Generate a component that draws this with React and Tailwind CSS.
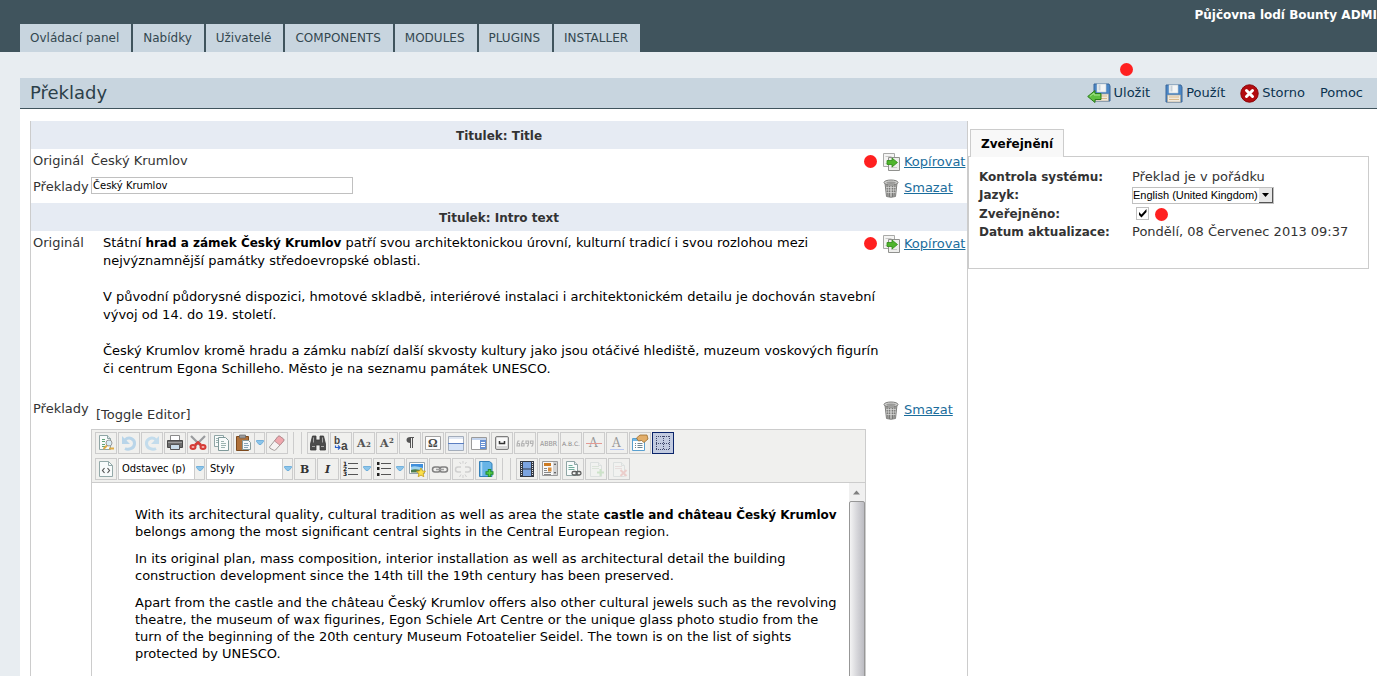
import React from 'react';

const menuItems = ['Ovládací panel', 'Nabídky', 'Uživatelé', 'COMPONENTS', 'MODULES', 'PLUGINS', 'INSTALLER'];

const Dot = ({ className }) => (
    <span className={`absolute w-[13px] h-[13px] rounded-full bg-[#ff2020] ${className}`} />
);

/* ---------- page icons ---------- */

const Floppy = () => (
    <g>
        <path d="M1 1h15l1 2v15H1z" fill="#4a86c6" stroke="#3a6699" />
        <path d="M4 1h9v8H4z" fill="#f3f5f6" stroke="#c4ccd4" strokeWidth=".6" />
        <path d="M5.5 1.5h2v6h-2z" fill="#c9d2da" />
        <path d="M2.5 11h13v7h-13z" fill="#f0e9dd" stroke="#a79f8c" strokeWidth=".6" />
        <path d="M4 13h10M4 15.5h10" stroke="#d9b98c" />
    </g>
);

const SaveIcon = () => (
    <svg width="24" height="20" viewBox="0 0 24 20">
        <g transform="translate(6 0)"><Floppy /></g>
        <path d="M.7 13.5 8 7.5v3h6v6H8v3z" fill="#5fbf3f" stroke="#2c7d1b" strokeLinejoin="round" />
        <path d="M3 13.3 7 10v2h6" fill="none" stroke="#a9e58f" />
    </svg>
);

const ApplyIcon = () => (
    <svg width="18" height="19" viewBox="0 0 18 19"><Floppy /></svg>
);

const CancelIcon = () => (
    <svg width="19" height="19" viewBox="0 0 19 19">
        <circle cx="9.5" cy="9.5" r="8.7" fill="#b30c10" stroke="#8c0508" />
        <path d="M6.5 6.5l6 6M12.5 6.5l-6 6" stroke="#fff" strokeWidth="3" strokeLinecap="round" />
    </svg>
);

const CopyIcon = () => (
    <svg width="18" height="18" viewBox="0 0 18 18">
        <path d="M.5 .5h11v13H.5z" fill="#f4f4f3" stroke="#a9aaa8" />
        <path d="M5.5 4.5h11v13h-11z" fill="#eeeeec" stroke="#90918e" />
        <path d="M2.5 3.5h6M2.5 10.5h2M8 14.5h6" stroke="#c9c9c7" />
        <path d="M4 7.5h5V5l5.5 4.5L9 14v-2.5H4z" fill="#4fb52c" stroke="#2f8a17" strokeWidth=".8" />
    </svg>
);

const TrashIcon = () => (
    <svg width="16" height="19" viewBox="0 0 16 19">
        <path d="M2 4l1.5 13.5q4.5 1.5 9 0L14 4z" fill="#b4b4b2" stroke="#80807e" />
        <path d="M4 6l1 11M6.5 7v11M9.5 7v11M12 6l-1 11" stroke="#737371" strokeWidth=".9" />
        <path d="M3 8.5h10M3 11h10M3.5 13.5h9" stroke="#dededc" strokeWidth=".7" />
        <ellipse cx="8" cy="3.5" rx="7" ry="2.5" fill="#d3d3d1" stroke="#7d7d7b" />
        <ellipse cx="8" cy="3.7" rx="4.8" ry="1.2" fill="#9a9a98" />
    </svg>
);

/* ---------- editor icons, drawn on a 20px grid ---------- */

const Sheet = ({ x = 0, y = 0 }) => (
    <g transform={`translate(${x} ${y})`}>
        <path d="M.5 .5h8l3 3v11H.5z" fill="#f8fbfb" stroke="#8fa5a5" />
        <path d="M8.5 .5v3h3" fill="#dfe9e9" stroke="#8fa5a5" />
    </g>
);

const icons = {
    preview: (
        <>
            <Sheet x={3} y={2} />
            <path d="M6 6.5h3M6 8.5h3M6 11.5h3M6 13.5h3" stroke="#62a378" />
            <circle cx="13" cy="10" r="3" fill="#d9ecf5" stroke="#9a9a9a" />
            <path d="M11 12.5l-3.5 3.5M13 15.5h5" stroke="#e0ab45" strokeWidth="2" />
        </>
    ),
    undo: (
        <>
            <path d="M6 7c4-4 10-1 9.5 4S9 17 6 15.5" fill="none" stroke="#b9d5e9" strokeWidth="3" />
            <path d="M3 3v8h8z" fill="#b9d5e9" />
        </>
    ),
    redo: (
        <>
            <path d="M14 7C10 3 4 6 4.5 11S11 17 14 15.5" fill="none" stroke="#c3dcec" strokeWidth="3" />
            <path d="M17 3v8H9z" fill="#c3dcec" />
        </>
    ),
    print: (
        <>
            <path d="M5.5 2.5h9v5h-9z" fill="#fff" stroke="#8a8a8a" />
            <path d="M2.5 7.5h15v7h-15z" fill="#6d6d6d" stroke="#4a4a4a" />
            <path d="M3 9.5h14" stroke="#9d9d9d" />
            <path d="M5.5 11.5h9v5h-9z" fill="#c9dce9" stroke="#555" />
        </>
    ),
    cut: (
        <>
            <path d="M3 3l9.5 9.5M17 3L7.5 12.5" stroke="#9a9c9e" strokeWidth="2.2" />
            <path d="M7 12l3-2.5 3 2.5" fill="none" stroke="#d53c37" strokeWidth="2.5" />
            <ellipse cx="5" cy="14" rx="2.5" ry="2" fill="#f4b5b1" stroke="#d53c37" strokeWidth="2" />
            <ellipse cx="15" cy="14" rx="2.5" ry="2" fill="#f4b5b1" stroke="#d53c37" strokeWidth="2" />
        </>
    ),
    copy: (
        <>
            <path d="M3.5 2.5h9v11h-9z" fill="#f8fbfb" stroke="#8fa5a5" />
            <path d="M5 5.5h3M5 7.5h2M5 9.5h2" stroke="#9bb3b0" />
            <g transform="translate(7 4)">
                <path d="M.5 .5h7l3 3v10H.5z" fill="#f8fbfb" stroke="#7f9999" />
                <path d="M3 4.5h3M3 6.5h5M3 8.5h5M3 10.5h4" stroke="#9bb3b0" />
            </g>
        </>
    ),
    paste: (
        <>
            <path d="M2.5 3.5h12v14h-12z" fill="#b0713a" stroke="#7c4a1e" />
            <path d="M5.5 2h6v3h-6z" fill="#9b9b9b" stroke="#666" strokeWidth=".7" />
            <path d="M8.5 7.5h6l2 2v7h-8z" fill="#f7fafa" stroke="#859b9b" />
            <path d="M10 10.5h4M10 12.5h5M10 14.5h4" stroke="#89a8b8" />
        </>
    ),
    eraser: (
        <>
            <path d="M2.5 14L11 3.5q1-1 2.2 0l3.3 2.5q1 1 0 2L8.5 17q-1 .8-2.2 0L3 15.3z" fill="#f6f2f2" stroke="#a29a9a" />
            <path d="M7.5 8L11 3.5q1-1 2.2 0l3.3 2.5q1 1 0 2L13 12.3z" fill="#efa7ad" stroke="#b3878b" strokeWidth=".8" />
        </>
    ),
    find: (
        <>
            <path d="M4.5 3h3.5v4h4V3h3.5l2 8v6h-5.5v-5H8v5H2.5v-6z" fill="#4b4b4b" stroke="#3a3a3a" strokeWidth=".8" />
            <path d="M5.5 4.5v5M14.5 4.5v5M4 13.5h3M13 13.5h3" stroke="#a5a5a5" />
        </>
    ),
    replace: (
        <>
            <text x="3" y="11" fontSize="10" fontWeight="bold" fill="#444" fontFamily="Liberation Sans">b</text>
            <text x="10" y="17" fontSize="12" fontWeight="bold" fill="#444" fontFamily="Liberation Sans">a</text>
            <path d="M4.5 12.5v2h4M7 12.5l2 2-2 2" fill="none" stroke="#2b60c9" strokeWidth="1.2" />
        </>
    ),
    sub: (
        <>
            <text x="3" y="14" fontSize="11" fontWeight="bold" fill="#555" fontFamily="DejaVu Serif">A</text>
            <text x="12" y="14" fontSize="7" fontWeight="bold" fill="#555" fontFamily="DejaVu Serif">2</text>
        </>
    ),
    sup: (
        <>
            <text x="3" y="14" fontSize="11" fontWeight="bold" fill="#555" fontFamily="DejaVu Serif">A</text>
            <text x="12" y="10" fontSize="7" fontWeight="bold" fill="#555" fontFamily="DejaVu Serif">2</text>
        </>
    ),
    pilcrow: (
        <>
            <path d="M10 4.5h4M10.5 4v11M12.5 4v11" fill="none" stroke="#555" />
            <path d="M10.5 4Q6.5 4 6.5 7t4 3z" fill="#555" />
        </>
    ),
    omega: (
        <>
            <path d="M2.5 3.5h15v13h-15z" fill="#fcfcfc" stroke="#a3a3a3" />
            <text x="5" y="14" fontSize="12" fill="#444" fontWeight="bold" fontFamily="Liberation Serif">Ω</text>
        </>
    ),
    hr: (
        <>
            <path d="M2.5 3.5h15v14h-15z" fill="#fff" stroke="#a3adbb" />
            <path d="M3 4h14v2H3z" fill="#dfe6f2" />
            <path d="M3 11h14v6H3z" fill="#d5e3f8" />
            <path d="M2 10.5h16" stroke="#5b7fc2" />
        </>
    ),
    pagebreak: (
        <>
            <path d="M2.5 4.5h15v12h-15z" fill="#fff" stroke="#9a9a9a" />
            <path d="M3 5h14v2H3z" fill="#c3d4ee" />
            <path d="M11 7h6v9h-6z" fill="#6992d2" />
            <path d="M12 9.5h4M12 11.5h4M12 13.5h4" stroke="#fff" />
        </>
    ),
    nbsp: (
        <>
            <rect x="3.5" y="3.5" width="13" height="13" rx="1.5" fill="#d8d8d8" stroke="#7d7d7d" />
            <path d="M5 5h10v8H5z" fill="#fafafa" />
            <path d="M7.5 8v2.5h5V8" fill="none" stroke="#333" strokeWidth="1.5" />
        </>
    ),
    quote: (
        <g fill="none" stroke="#b4b4b4" strokeWidth="1.2">
            <path d="M4.5 8H3Q2 10 2 13h2.5v-2.5H2M9 8H7.5q-1 2-1 5H9v-2.5H6.5" />
            <path d="M13.5 10.5H11V8h2.5v2.5q0 2-1.5 3M18 10.5h-2.5V8H18v2.5q0 2-1.5 3" />
        </g>
    ),
    abbr: <text x="2" y="13" fontSize="7" fill="#999" fontFamily="DejaVu Sans Mono">ABBR</text>,
    acronym: <text x="1" y="13" fontSize="6" fill="#888" fontFamily="DejaVu Sans">A.B.C.</text>,
    del: (
        <>
            <text x="5" y="14" fontSize="12" fill="#999" fontFamily="DejaVu Serif">A</text>
            <path d="M2 10.5h16" stroke="#e39a94" />
        </>
    ),
    ins: (
        <>
            <text x="5" y="14" fontSize="12" fill="#999" fontFamily="DejaVu Serif">A</text>
            <path d="M3 16.5h14" stroke="#b5c6f2" />
        </>
    ),
    attribs: (
        <>
            <path d="M2.5 5.5h12v12h-12z" fill="#fff" stroke="#5aa0cf" />
            <path d="M3 6h11v2H3z" fill="#76b8e4" />
            <path d="M5 10.5h1M5 12.5h1M5 14.5h1M7.5 10.5h5M7.5 12.5h5M7.5 14.5h5" stroke="#6f8590" />
            <path d="M6.5 5L10 2h7l1 4-4 3.5-2.5-2-3 .5z" fill="#e2ae6a" stroke="#9c6c2c" strokeWidth=".8" />
        </>
    ),
    guides: (
        <path d="M3 3.5h14M3 10.5h14M3 16.5h14M3.5 3v14M10.5 3v14M16.5 3v14" fill="none" stroke="#3f476b" strokeDasharray="1 1" />
    ),
    code: (
        <>
            <path d="M3.5 2.5h9l4 4v11h-13z" fill="#f8fbfb" stroke="#93a9a9" />
            <path d="M12.5 2.5v4h4" fill="none" stroke="#93a9a9" />
            <path d="M8.5 9L6.5 11.5l2 2.5M11.5 9l2 2.5-2 2.5" fill="none" stroke="#555" strokeWidth="1.2" />
        </>
    ),
    bold: <text x="5" y="14" fontSize="11" fontWeight="bold" fill="#333" fontFamily="DejaVu Serif">B</text>,
    italic: <text x="7" y="14" fontSize="11" fontWeight="bold" fontStyle="italic" fill="#333" fontFamily="DejaVu Serif">I</text>,
    ol: (
        <>
            <text x="2" y="7" fontSize="6" fontWeight="bold" fill="#222" fontFamily="DejaVu Sans">1</text>
            <text x="2" y="12" fontSize="6" fontWeight="bold" fill="#222" fontFamily="DejaVu Sans">2</text>
            <text x="2" y="17" fontSize="6" fontWeight="bold" fill="#222" fontFamily="DejaVu Sans">3</text>
            <path d="M7 4.5h10M7 9.5h10M7 15.5h10" stroke="#555" />
        </>
    ),
    ul: (
        <>
            <path d="M3 3h2.5v3H3zM3 8h2.5v3H3zM3 14h2.5v3H3z" fill="#222" />
            <path d="M7 4.5h10M7 9.5h10M7 15.5h10" stroke="#555" />
        </>
    ),
    image: (
        <>
            <path d="M2.5 3.5h15v11h-15z" fill="#fff" stroke="#94a3ad" />
            <path d="M4 5h12v5H4z" fill="#3f8fdc" />
            <path d="M4 8q4-2 12 1v4H4z" fill="#9fd3ee" />
            <path d="M4 11q5-2 12 1v1.5H4z" fill="#4d7c4d" />
            <path d="M14 9l1.4 2.9 3.1.4-2.3 2.2.6 3.2-2.8-1.6-2.8 1.6.6-3.2-2.3-2.2 3.1-.4z" fill="#fbe04a" stroke="#c59c17" strokeWidth=".8" />
        </>
    ),
    link: (
        <g fill="none" stroke="#808080" strokeWidth="1.5">
            <rect x="2.5" y="8" width="8" height="5" rx="2.5" />
            <rect x="9.5" y="8" width="8" height="5" rx="2.5" />
            <path d="M6 10.5h8" stroke="#a0a0a0" />
        </g>
    ),
    unlink: (
        <g fill="none" stroke="#cfcfcf" strokeWidth="1.5">
            <path d="M8 8H5q-2.5 0-2.5 2.5T5 13h3M12 8h3q2.5 0 2.5 2.5T15 13h-3" />
            <path d="M8 5L6.5 3M12 5l1.5-2M10 4.5V2M8 15.5L6.5 18M12 15.5l1.5 2.5M10 16v3" strokeWidth="1" />
        </g>
    ),
    book: (
        <>
            <path d="M3.5 2.5h10l2.5 2v13H3.5z" fill="#67b4e6" stroke="#3380b9" />
            <path d="M5.5 3v14" stroke="#b6def7" strokeWidth="1.5" />
            <path d="M13.5 10v8M9.5 14h8" stroke="#1f8b2b" strokeWidth="3.4" />
            <path d="M13.5 11v6M10.5 14h6" stroke="#58cf4b" strokeWidth="1.6" />
        </>
    ),
    film: (
        <>
            <path d="M3 2h14v16H3z" fill="#343b47" />
            <path d="M6 3h8v6.5H6zM6 10.5h8V17H6z" fill="#7ba4e1" />
            <path d="M4.5 3v14M15.5 3v14" stroke="#e6e6e6" strokeDasharray="1 1" />
        </>
    ),
    article: (
        <>
            <path d="M2.5 2.5h15v14h-15z" fill="#f8f8f8" stroke="#9a9a9a" />
            <path d="M4 4h7v3H4z" fill="#cd7b22" />
            <path d="M4 9.5h3M4 11.5h3M4 13.5h7M4 15.5h7" stroke="#888" />
            <path d="M8 8.5h3.5v4H8z" fill="#d98f3e" />
            <path d="M13 3h4v13h-4z" fill="#d4d4d4" />
            <path d="M14 6l1-2 1 2zM14 13l1 2 1-2z" fill="#444" />
        </>
    ),
    doclink: (
        <>
            <Sheet x={3} y={2} />
            <path d="M5.5 6.5h4M5.5 8.5h6M5.5 10.5h6" stroke="#6fae9c" />
            <g fill="none" stroke="#5e5e5e" strokeWidth="1.3">
                <rect x="9" y="12.5" width="5" height="3.5" rx="1.7" />
                <rect x="13" y="12.5" width="5" height="3.5" rx="1.7" />
            </g>
        </>
    ),
    rowadd: (
        <g opacity=".2">
            <Sheet x={4} y={3} />
            <path d="M6 7.5h7M6 9.5h7" stroke="#8bb88b" />
            <path d="M14.5 10v7M11 13.5h7" stroke="#48b33c" strokeWidth="2" />
        </g>
    ),
    rowdel: (
        <g opacity=".2">
            <Sheet x={4} y={3} />
            <path d="M6 7.5h7M6 9.5h7" stroke="#c59b9b" />
            <path d="M11.5 11l6 6M17.5 11l-6 6" stroke="#dc4b46" strokeWidth="2" />
        </g>
    )
};

const Arrow = () => (
    <svg width="8" height="6" viewBox="0 0 8 6">
        <path d="M.5 .5h7v1L5 4.5H3L.5 1.5z" fill="#8cc5ea" stroke="#5fa6d8" strokeWidth=".8" />
    </svg>
);

const Tool = ({ name, active }) => (
    <button
        type="button"
        aria-label={name}
        className={`flex w-[22px] h-[22px] shrink-0 items-center justify-center border ${active ? 'border-[#0a246a] bg-[#c2cbe0]' : 'border-[#cccccc]'}`}
    >
        <svg width="20" height="20" viewBox="0 0 20 20" className="shrink-0">{icons[name]}</svg>
    </button>
);

const SplitTool = ({ name }) => (
    <div className="flex">
        <Tool name={name} />
        <button type="button" aria-label={`${name} options`} className="flex w-[10px] items-center justify-center border border-l-0 border-[#cccccc]">
            <Arrow />
        </button>
    </div>
);

const ToolSelect = ({ label }) => (
    <div className="relative flex w-[87px] h-[22px] border border-[#cccccc] bg-white">
        <select aria-label={label} className="w-full appearance-none pl-[3px] text-[11px] leading-5 text-black font-['DejaVu_Sans_Condensed','DejaVu_Sans',sans-serif]">
            <option>{label}</option>
        </select>
        <span className="pointer-events-none absolute inset-y-0 right-0 flex w-[10px] items-center justify-center border-l border-[#cccccc] bg-[#f0f0ee]">
            <Arrow />
        </span>
    </div>
);

const Separator = () => (
    <div className="mx-1 h-[22px] w-[9px] border-x border-[#cccccc]" />
);

const Editor = () => (
    <div className="border border-[#cccccc]">
        <div className="flex flex-col gap-1 border-b border-[#cccccc] bg-[#f0f0ee] px-[3px] py-[2px]">
            <div className="flex gap-px">
                {['preview', 'undo', 'redo', 'print', 'cut', 'copy'].map((n) => <Tool key={n} name={n} />)}
                <SplitTool name="paste" />
                <Tool name="eraser" />
                <Separator />
                {['find', 'replace', 'sub', 'sup', 'pilcrow', 'omega', 'hr', 'pagebreak', 'nbsp', 'quote', 'abbr', 'acronym', 'del', 'ins', 'attribs'].map((n) => (
                    <Tool key={n} name={n} />
                ))}
                <Tool name="guides" active />
            </div>
            <div className="flex gap-px">
                <Tool name="code" />
                <ToolSelect label="Odstavec (p)" />
                <ToolSelect label="Styly" />
                <Tool name="bold" />
                <Tool name="italic" />
                <SplitTool name="ol" />
                <SplitTool name="ul" />
                {['image', 'link', 'unlink', 'book'].map((n) => <Tool key={n} name={n} />)}
                <Separator />
                {['film', 'article', 'doclink', 'rowadd', 'rowdel'].map((n) => <Tool key={n} name={n} />)}
            </div>
        </div>
        <div className="flex h-[400px]">
            <div className="flex-1 space-y-[10px] pt-[23px] pl-[43px] pr-1 leading-[17px] text-black">
                <p>
                    With its architectural quality, cultural tradition as well as area the state <b className="text-xs leading-none">castle and château Český Krumlov</b> belongs among the most significant central sights in the Central European region.
                </p>
                <p>
                    In its original plan, mass composition, interior installation as well as architectural detail the building <br />
                    construction development since the 14th till the 19th century has been preserved.
                </p>
                <p>
                    Apart from the castle and the château Český Krumlov offers also other cultural jewels such as the revolving theatre, the museum of wax figurines, Egon Schiele Art Centre or the unique glass photo studio from the turn of the beginning of the 20th century Museum Fotoatelier Seidel. The town is on the list of sights protected by UNESCO.
                </p>
            </div>
            <div className="flex w-4 flex-col bg-[#f0f0f0]">
                <div className="flex h-[18px] items-center justify-center">
                    <svg width="7" height="5" viewBox="0 0 7 5"><path d="M0 4.5 3.5 .5 7 4.5z" fill="#808080" /></svg>
                </div>
                <div className="flex-1 rounded-t-xs border border-[#979797] bg-linear-to-r from-[#f4f4f4] via-[#d6d6da] to-[#bcbcc2]" />
            </div>
        </div>
    </div>
);

const ActionLink = ({ icon, children, dot }) => (
    <div className="relative flex h-[22px] items-center pl-[17px]">
        {dot && <Dot className="-left-[2px] top-1" />}
        <span className="flex w-[21px]">{icon}</span>
        <a href="#" className="text-[#1a6d9c] underline">{children}</a>
    </div>
);

const SectionHead = ({ children }) => (
    <tr>
        <th colSpan={3} className="h-7 bg-[#e6ebf3] pt-[2px] text-center text-xs font-bold">{children}</th>
    </tr>
);

const Translation = () => (
    <table className="w-full table-fixed border-separate border-spacing-0 border-x border-[#cccccc] text-left">
        <colgroup>
            <col className="w-[60px]" />
            <col />
            <col className="w-[101px]" />
        </colgroup>
        <tbody>
            <SectionHead>Titulek: Title</SectionHead>
            <tr className="align-top">
                <td className="h-[26px] pl-[2px] pt-[3px]">Originál</td>
                <td className="pt-[3px]">Český Krumlov</td>
                <td className="pt-[2px]"><ActionLink dot icon={<CopyIcon />}>Kopírovat</ActionLink></td>
            </tr>
            <tr className="align-top">
                <td className="h-7 pl-[2px] pt-[3px]"><label htmlFor="title">Překlady</label></td>
                <td className="pt-[2px]">
                    <input
                        id="title"
                        defaultValue="Český Krumlov"
                        className="block h-[17px] w-[262px] border border-[#c0c0c0] bg-white px-px text-[10px] text-black"
                    />
                </td>
                <td className="pt-[2px]"><ActionLink icon={<TrashIcon />}>Smazat</ActionLink></td>
            </tr>
            <SectionHead>Titulek: Intro text</SectionHead>
            <tr className="align-top">
                <td className="pl-[2px] pt-[3px]">Originál</td>
                <td className="pt-[3px] pb-[19px] pl-3 text-black">
                    {/* the source text runs a little past its column, under the row's links */}
                    <div className="-mr-6 space-y-[18px]">
                        <p>
                            Státní <b className="text-xs leading-none">hrad a zámek Český Krumlov</b> patří svou architektonickou úrovní, kulturní tradicí i svou rozlohou mezi <br />
                            nejvýznamnější památky středoevropské oblasti.
                        </p>
                        <p>
                            V původní půdorysné dispozici, hmotové skladbě, interiérové instalaci i architektonickém detailu je dochován stavební vývoj od 14. do 19. století.
                        </p>
                        <p>
                            Český Krumlov kromě hradu a zámku nabízí další skvosty kultury jako jsou otáčivé hlediště, muzeum voskových figurín či centrum Egona Schilleho. Město je na seznamu památek UNESCO.
                        </p>
                    </div>
                </td>
                <td className="pt-[2px]"><ActionLink dot icon={<CopyIcon />}>Kopírovat</ActionLink></td>
            </tr>
            <tr className="align-top">
                <td className="pl-[2px] pt-[3px]">Překlady</td>
                <td className="pt-[9px]">
                    <button type="button" className="mb-[5px] ml-[5px] block">[Toggle Editor]</button>
                    <Editor />
                </td>
                <td className="pt-[2px]"><ActionLink icon={<TrashIcon />}>Smazat</ActionLink></td>
            </tr>
        </tbody>
    </table>
);

const Publishing = () => (
    <div className="mr-2 mt-2 w-[401px] shrink-0">
        <h3 className="relative z-10 ml-[2px] -mb-px inline-block h-7 border border-b-0 border-[#cccccc] bg-[#f8f8f8] px-[10px] text-xs font-bold leading-7 text-black">
            Zveřejnění
        </h3>
        <div className="h-[113px] border border-[#cccccc] pl-[10px] pt-[11px]">
            <dl className="grid grid-cols-[153px_1fr] items-center leading-[18px] [&>dt]:text-xs [&>dt]:leading-[18px] [&>dt]:font-bold">
                <dt>Kontrola systému:</dt>
                <dd>Překlad je v pořádku</dd>
                <dt><label htmlFor="lang">Jazyk:</label></dt>
                <dd className="flex">
                    <span className="relative flex h-[17px] w-[142px] border border-[#c0c0c0]">
                        <select id="lang" className="w-full appearance-none bg-white text-[11px] leading-[15px] text-black font-['Liberation_Sans',sans-serif]">
                            <option>English (United Kingdom)</option>
                        </select>
                        <span className="pointer-events-none absolute inset-y-0 right-0 flex w-[14px] items-center justify-center border-b border-r border-[#555] bg-[#e8e8e8]">
                            <svg width="7" height="4" viewBox="0 0 7 4"><path d="M0 0h7L3.5 4z" fill="#000" /></svg>
                        </span>
                    </span>
                </dd>
                <dt><label htmlFor="published">Zveřejněno:</label></dt>
                <dd className="relative flex h-[19px] items-center pl-1">
                    <span className="relative flex">
                        <input id="published" type="checkbox" defaultChecked className="peer h-[13px] w-[13px] appearance-none border border-[#c0c0c0] bg-white" />
                        <svg width="13" height="13" viewBox="0 0 13 13" className="pointer-events-none absolute inset-0 hidden peer-checked:block">
                            <path d="M3 5v3l2.5 2.5L10.5 5V2L5.5 7.5z" fill="#000" />
                        </svg>
                    </span>
                    <Dot className="left-[23px] top-1" />
                </dd>
                <dt>Datum aktualizace:</dt>
                <dd>Pondělí, 08 Červenec 2013 09:37</dd>
            </dl>
        </div>
    </div>
);

const App = () => {
    return (
        <div className="flex h-screen flex-col overflow-hidden bg-[#e8edf1] font-['Verdana','DejaVu_Sans',sans-serif] text-[13px] leading-[18px] text-[#333333]">
            <header className="flex h-[52px] shrink-0 items-end bg-[#40545d] pl-5">
                <nav className="flex gap-[2px]">
                    {menuItems.map((item) => (
                        <a key={item} href="#" className="h-7 whitespace-nowrap bg-[#c8d5df] pl-[10px] pr-3 text-xs leading-[29px] text-[#33474f]">
                            {item}
                        </a>
                    ))}
                </nav>
                <strong className="ml-auto self-start pt-[6px] text-xs leading-[18px] text-white">Půjčovna lodí Bounty ADMI</strong>
            </header>

            <div className="ml-5 mt-[26px] flex min-h-0 flex-1 flex-col">
                <div className="flex h-[31px] shrink-0 items-center border-b border-[#40545d] bg-[#c8d5df] pl-[10px] pr-[14px]">
                    <h1 className="text-lg text-[#2c4049]">Překlady</h1>
                    <div className="ml-auto flex gap-[15px] text-[#0b3350]">
                        <button type="button" className="relative flex items-center gap-[3px]">
                            <Dot className="left-[33px] -top-[20px]" />
                            <SaveIcon />Uložit
                        </button>
                        <button type="button" className="flex items-center gap-[3px]"><ApplyIcon />Použít</button>
                        <button type="button" className="flex items-center gap-[3px]"><CancelIcon />Storno</button>
                        <button type="button">Pomoc</button>
                    </div>
                </div>
                <main className="flex min-h-0 flex-1 items-start bg-white pl-[10px] pt-3">
                    <div className="min-w-0 flex-1">
                        <Translation />
                    </div>
                    <Publishing />
                </main>
            </div>
        </div>
    );
};

export default App;
